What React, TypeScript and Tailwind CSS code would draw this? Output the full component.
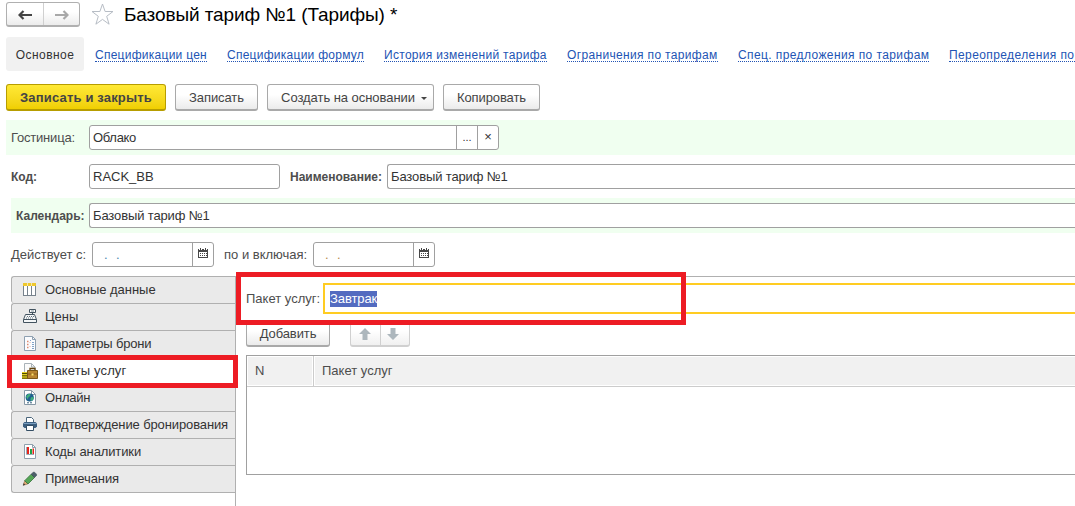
import type { ReactNode } from 'react';

const links = [
  { label: 'Спецификации цен', width: 'w-[112px]', spacing: 'tracking-[0.26px]' },
  { label: 'Спецификации формул', width: 'w-[137px]', spacing: 'tracking-[0.26px]' },
  { label: 'История изменений тарифа', width: 'w-[163px]', spacing: 'tracking-[0.3px]' },
  { label: 'Ограничения по тарифам', width: 'w-[151px]', spacing: 'tracking-[0.34px]' },
  { label: 'Спец. предложения по тарифам', width: 'w-[191px]', spacing: 'tracking-[0.4px]' },
  { label: 'Переопределения по', width: 'w-[130px]', spacing: 'tracking-[0.4px]' },
];

const TableIcon = () => (
  <svg width="16" height="16" viewBox="0 0 16 16" shapeRendering="crispEdges">
    <path d="M1 1h13v13H1z" fill="#77828c" />
    <path d="M2 4h3v9H2zM6 4h3v9H6zM10 4h3v9h-3z" fill="#fff" />
    <path d="M1 1h13v3H1z" fill="#efc82e" />
    <path d="M5 1h1v3H5zM9 1h1v3H9z" fill="#f7e9a8" />
  </svg>
);

const CashIcon = () => (
  <svg width="16" height="16" viewBox="0 0 16 16" fill="none" stroke="#43535f">
    <path d="M10.5 3.5v2" />
    <path d="M7.5.5h6v3h-6z" fill="#fff" />
    <path d="M3.5 5.5h9l2 5v3h-13v-3z" fill="#f4f6f7" />
    <path d="M1.5 10.5h13" />
    <path d="M5 7.5h1M7 7.5h1M9 7.5h1M11 7.5h1M4 9h1M6 9h1M8 9h1M10 9h1" strokeWidth=".8" />
    <path d="M9 2h3" stroke="#7d8b95" />
  </svg>
);

const ParamsIcon = () => (
  <svg width="16" height="16" viewBox="0 0 16 16" fill="none">
    <path d="M2.5.5h8l3 3v11h-11z" fill="#fbfcfe" stroke="#8ea0b1" />
    <path d="M10.5.5v3h3" stroke="#8ea0b1" />
    <path d="M5 5.5h1.5M5 8.5h1.5M5 11.5h1.5" stroke="#e08a6e" strokeWidth="1.4" />
    <path d="M8 4.5h1M10 6.5h2M10 8.5h2M10 10.5h2M10 12.5h2" stroke="#82a4c9" />
    <path d="M7.5 6.5h1M7.5 10.5h1" stroke="#e4b3a2" />
  </svg>
);

const PackageIcon = () => (
  <svg className="shrink-0" width="17" height="17" viewBox="0 0 17 17" fill="none">
    <path d="M2.5 11V.5h7l3.5 3.5v4" fill="#fafafa" stroke="#a9b2b8" />
    <path d="M9.5.5v3.5H13" stroke="#a9b2b8" />
    <path d="M0 9h6v7H0z" fill="#e2d020" />
    <path d="M0 10.5h6M0 12.8h6M0 15.2h6" stroke="#4f4a00" />
    <path d="M8 8V5.5h5V8" stroke="#5f430f" strokeWidth="1.3" />
    <path d="M5.5 7.5h10v8h-10z" fill="#b98530" stroke="#7b5618" />
    <path d="M6 11h9" stroke="#8b5f1c" />
    <path d="M9.5 10.5h2v2h-2z" fill="#ffe36b" />
  </svg>
);

const OnlineIcon = () => (
  <svg width="16" height="16" viewBox="0 0 16 16" fill="none">
    <path d="M2.5.5h7l4 4v10h-11z" fill="#fff" stroke="#8798a6" />
    <path d="M9.5.5v4h4" stroke="#8798a6" />
    <circle cx="7.7" cy="7.5" r="4.1" fill="#20608f" />
    <path d="M4 6.5 6.5 4l2 .2-.4 1.8-1.8 1.4-.6 2zM9 7.2l2.6-.2v2L9.5 11l-1.2-1z" fill="#3fae7d" />
    <path d="M5 12.8h6" stroke="#38617d" strokeDasharray="2 1" />
  </svg>
);

const PrinterIcon = () => (
  <svg width="16" height="16" viewBox="0 0 16 16" fill="none">
    <path d="M4.5 5.5v-5h5l2 2v3" fill="#fff" stroke="#49647a" />
    <path d="M2.5 5h11L15 6.500v3L13.500 11h-11L1 9.500v-3z" fill="#3d5f80" />
    <path d="M2 6.500h12" stroke="#7b9fc0" />
    <path d="M4.500 8.500h7v5h-7z" fill="#fff" stroke="#344e65" />
  </svg>
);

const ChartIcon = () => (
  <svg width="16" height="16" viewBox="0 0 16 16" fill="none">
    <path d="M2.5.5h8l3 3v11h-11z" fill="#fff" stroke="#8ea0ad" />
    <path d="M10.5.5v3h3" stroke="#8ea0ad" />
    <path d="M4.500 3v7.500H12" stroke="#9babb7" />
    <path d="M5 3h2v7H5z" fill="#e6251d" />
    <path d="M8 5h2v5H8z" fill="#1ba348" />
    <path d="M10.500 4.500h1.500V10h-1.500z" fill="#e6251d" />
  </svg>
);

const PencilIcon = () => (
  <svg width="16" height="16" viewBox="0 0 16 16" fill="none">
    <path d="m1.200 14.300 1.500-4.600 3.200 3.200z" fill="#e3aa72" stroke="#8a6547" strokeWidth=".6" />
    <path d="m1 14.500.7-2.200 1.500 1.500z" fill="#333" />
    <path d="m2.700 9.700 6.500-6.500 3.300 3.300L6 13z" fill="#55a656" stroke="#35713a" strokeWidth=".8" />
    <path d="m9.200 3.200 2-2h1.300l2 2v1.300l-2 2z" fill="#4d5f6a" stroke="#3b4c55" strokeWidth=".6" />
  </svg>
);

const tabs = [
  { label: 'Основные данные', icon: <TableIcon />, spacing: 'tracking-[-0.03px]' },
  { label: 'Цены', icon: <CashIcon />, spacing: 'tracking-[0px]' },
  { label: 'Параметры брони', icon: <ParamsIcon />, spacing: 'tracking-[-0.2px]' },
  { label: 'Пакеты услуг', icon: <PackageIcon />, active: true, spacing: 'tracking-[0.13px]' },
  { label: 'Онлайн', icon: <OnlineIcon />, spacing: 'tracking-[-0.2px]' },
  { label: 'Подтверждение бронирования', icon: <PrinterIcon />, spacing: 'tracking-[-0.12px]' },
  { label: 'Коды аналитики', icon: <ChartIcon />, spacing: 'tracking-[-0.12px]' },
  { label: 'Примечания', icon: <PencilIcon />, spacing: 'tracking-[-0.1px]' },
];

const CalendarIcon = () => (
  <svg width="10" height="10" viewBox="0 0 10 10" shapeRendering="crispEdges">
    <path d="M0 1h10v9H0z" fill="#484848" />
    <path d="M1 4h8v5H1z" fill="#fff" />
    <path d="M2 0h1v2H2zM7 0h1v2H7z" fill="#484848" />
    <path d="M1 1h1v1H1zM3 1h1v1H3zM6 1h1v1H6zM8 1h1v1H8z" fill="#fff" />
    <path d="M2 5h1v1H2zM4 5h1v1H4zM6 5h1v1H6zM8 5h1v1H8zM2 7h1v1H2zM4 7h1v1H4zM6 7h1v1H6zM8 7h1v1H8z" fill="#484848" />
  </svg>
);

const Button = ({ children, className }: { children: ReactNode; className: string }) => (
  <button
    className={`h-[27px] shrink-0 flex items-center justify-center whitespace-nowrap rounded-[3px] border border-b-2 border-[#a9a9a9] bg-linear-to-b from-white from-40% to-[#ebebeb] pt-px text-[#444] ${className}`}
  >
    {children}
  </button>
);

const DateField = ({ dots }: { dots: string }) => (
  <div className="flex h-[25px] w-[122px] shrink-0 rounded-[3px] border border-[#a0a0a0] bg-white">
    <span className={`flex w-[99px] gap-[8.4px] pl-[11px] leading-[24px] ${dots}`}>
      <span>.</span>
      <span>.</span>
    </span>
    <button className="flex flex-1 items-center justify-center border-l border-[#a0a0a0] pb-[3px]">
      <CalendarIcon />
    </button>
  </div>
);

const App = () => {
  return (
    <div className="relative h-[506px] w-[1075px] overflow-hidden bg-white font-['Liberation_Sans',Arial,sans-serif] text-[13px] leading-4 text-[#4d4d4d]">
      <header className="flex h-[37px] items-start pl-1.5 pt-0.5">
        <div className="flex h-[25px] w-[74px] rounded-[3px] border border-b-2 border-[#b0b0b0] bg-linear-to-b from-white from-40% to-[#ececec]">
          <button className="flex w-[37px] items-center justify-center border-r border-[#d0d0d0] pt-px">
            <svg width="14" height="10" viewBox="0 0 14 10" fill="none" stroke="#444" strokeWidth="2.2">
              <path d="M14 5H2M5.500 1 1.500 5l4 4" />
            </svg>
          </button>
          <button className="flex flex-1 items-center justify-center pt-px">
            <svg width="14" height="10" viewBox="0 0 14 10" fill="none" stroke="#a8a8a8" strokeWidth="2.2">
              <path d="M0 5h12M8.500 1l4 4-4 4" />
            </svg>
          </button>
        </div>
        <svg className="ml-[11px] mt-px" width="23" height="23" viewBox="0 0 23 23" fill="none" stroke="#b7bdc5">
          <path d="m11.5 1 2.6 7.500H22l-6.300 4.800 2.400 7.900-6.600-4.800-6.600 4.800 2.400-7.900L1 8.500h7.900z" />
        </svg>
        <h1 className="ml-[10px] mt-px whitespace-nowrap text-[19px] leading-6 tracking-[-0.1px] text-black">
          Базовый тариф №1 (Тарифы) *
        </h1>
      </header>

      <nav className="flex h-[34px] items-center pl-1.5">
        <span className="flex h-[34px] w-[78px] shrink-0 items-center justify-center rounded-[3px] bg-[#f1f1f1] pt-0.5 text-[12px] tracking-[0.45px] text-[#333]">
          Основное
        </span>
        <div className="ml-[11px] flex gap-5 pt-px">
          {links.map((link) => (
            <a
              key={link.label}
              className={`h-[14px] shrink-0 whitespace-nowrap border-b border-dotted border-[#2254b4] text-[12px] leading-[14px] text-[#2254b4] ${link.width} ${link.spacing}`}
            >
              {link.label}
            </a>
          ))}
        </div>
      </nav>

      <div className="flex gap-[9px] pl-1.5 pt-[13px]">
        <button className="flex h-[27px] w-[160px] items-center justify-center rounded-[3px] border border-b-2 border-[#b79d00] bg-linear-to-b from-[#ffe934] to-[#f0cf00] pt-px font-bold tracking-[0.17px] text-[#444]">
          Записать и закрыть
        </button>
        <Button className="w-[83px] tracking-[-0.1px]">Записать</Button>
        <Button className="w-[167px] pl-[7px] tracking-[-0.05px]">
          Создать на основании
          <svg className="ml-1.5 mt-0.5" width="6" height="3" viewBox="0 0 6 3" fill="#444">
            <path d="M0 0h6L3 3z" />
          </svg>
        </Button>
        <Button className="w-[97px] tracking-[-0.1px]">Копировать</Button>
      </div>

      <div className="ml-1.5 mt-[9px] flex h-[35px] items-center bg-[#f0fff0] pl-[5px]">
        <label className="w-[78px] shrink-0 tracking-[-0.2px]">Гостиница:</label>
        <div className="flex h-[25px] w-[410px] rounded-[3px] border border-[#a0a0a0] bg-white text-[#333]">
          <span className="flex-1 pl-[3px] leading-[23px] tracking-[-0.3px]">Облако</span>
          <button className="w-[21px] border-l border-[#a0a0a0] text-[11px] leading-[23px]">...</button>
          <button className="w-[21px] border-l border-[#a0a0a0] pb-0.5 leading-[18px]">×</button>
        </div>
      </div>

      <div className="mt-[9px] flex h-[25px] items-center pl-[11px]">
        <label className="w-[78px] shrink-0 text-[12px] font-bold">Код:</label>
        <div className="h-[25px] w-[191px] shrink-0 rounded-[3px] border border-[#a0a0a0] pl-[3px] leading-[23px] text-[#333]">RACK_BB</div>
        <label className="ml-[10px] w-[97px] shrink-0 text-[12px] font-bold">Наименование:</label>
        <div className="h-[25px] flex-1 rounded-l-[3px] border border-r-0 border-[#a0a0a0] pl-[3px] leading-[23px] tracking-[-0.13px] text-[#333]">Базовый тариф №1</div>
      </div>

      <div className="ml-[11px] mt-[9px] flex h-[35px] items-center bg-[#f0fff0] pl-[5px]">
        <label className="w-[73px] shrink-0 text-[12px] font-bold">Календарь:</label>
        <div className="h-[25px] flex-1 rounded-l-[3px] border border-r-0 border-[#a0a0a0] bg-white pl-[3px] leading-[23px] tracking-[-0.13px] text-[#333]">Базовый тариф №1</div>
      </div>

      <div className="mt-[9px] flex h-[25px] items-center pl-[11px]">
        <label className="w-[81px] shrink-0">Действует с:</label>
        <DateField dots="text-[#4a86b0]" />
        <label className="ml-[10px] w-[89px] shrink-0">по и включая:</label>
        <DateField dots="text-[#b98a4a]" />
      </div>

      <main className="mt-[9px] flex h-[230px]">
        <aside className="ml-[11px] h-full w-[225px] shrink-0 border-r border-[#b0b0b0]">
          {tabs.map((tab) => (
            <div
              key={tab.label}
              className={`flex h-[27px] items-center rounded-l-[3px] border-l border-t border-[#b0b0b0] pl-2.5 text-[#333] last:h-[28px] last:border-b ${tab.active ? 'bg-white' : 'bg-[#eaeaea]'}`}
            >
              <span className="flex w-[23px] shrink-0">{tab.icon}</span>
              <span className={`whitespace-nowrap ${tab.spacing}`}>{tab.label}</span>
            </div>
          ))}
        </aside>
        <section className="min-w-0 flex-1 border-t border-[#b0b0b0] pl-2.5">
          <div className="mt-1.5 flex h-[31px] items-center">
            <label className="w-[77px] shrink-0">Пакет услуг:</label>
            <div className="flex h-[31px] flex-1 items-center border-2 border-r-0 border-[#fc2] pl-[5px]">
              <span className="bg-[#536bc0] tracking-[-0.1px] text-white">Завтрак</span>
            </div>
          </div>
          <div className="mt-[6px] flex">
            <Button className="w-[84px] tracking-[-0.1px]">Добавить</Button>
            <div className="ml-5 flex h-[27px] w-[60px] rounded-[3px] border border-b-2 border-[#d0d0d0] bg-linear-to-b from-white from-40% to-[#f0f0f0]">
              <button className="flex w-[30px] items-center justify-center border-r border-[#d0d0d0] pr-0.5 pt-px">
                <svg width="12" height="12" viewBox="0 0 12 12" fill="#adb7bd">
                  <path d="m6 0 6 6H8.500v6h-5V6H0z" />
                </svg>
              </button>
              <button className="flex flex-1 items-center justify-center pr-1 pt-px">
                <svg width="12" height="12" viewBox="0 0 12 12" fill="#adb7bd">
                  <path d="M6 12 0 6h3.500V0h5v6H12z" />
                </svg>
              </button>
            </div>
          </div>
          <div className="mt-2 h-[120px] border border-r-0 border-[#a0a0a0]">
            <div className="flex h-[31px] border-b border-[#ccc] py-px pl-px leading-7">
              <span className="mr-px w-[64px] bg-[#f1f1f1] pl-[7px]">N</span>
              <span className="-my-px w-px bg-[#ccc]" />
              <span className="ml-px flex-1 bg-[#f1f1f1] pl-[7px]">Пакет услуг</span>
            </div>
          </div>
        </section>
      </main>

      <div className="pointer-events-none absolute left-[236px] top-[272px] h-[53px] w-[450px] border-5 border-[#ed1c24]" />
      <div className="pointer-events-none absolute left-[7px] top-[355px] h-[33px] w-[231px] border-5 border-[#ed1c24]" />
    </div>
  );
};

export default App;
